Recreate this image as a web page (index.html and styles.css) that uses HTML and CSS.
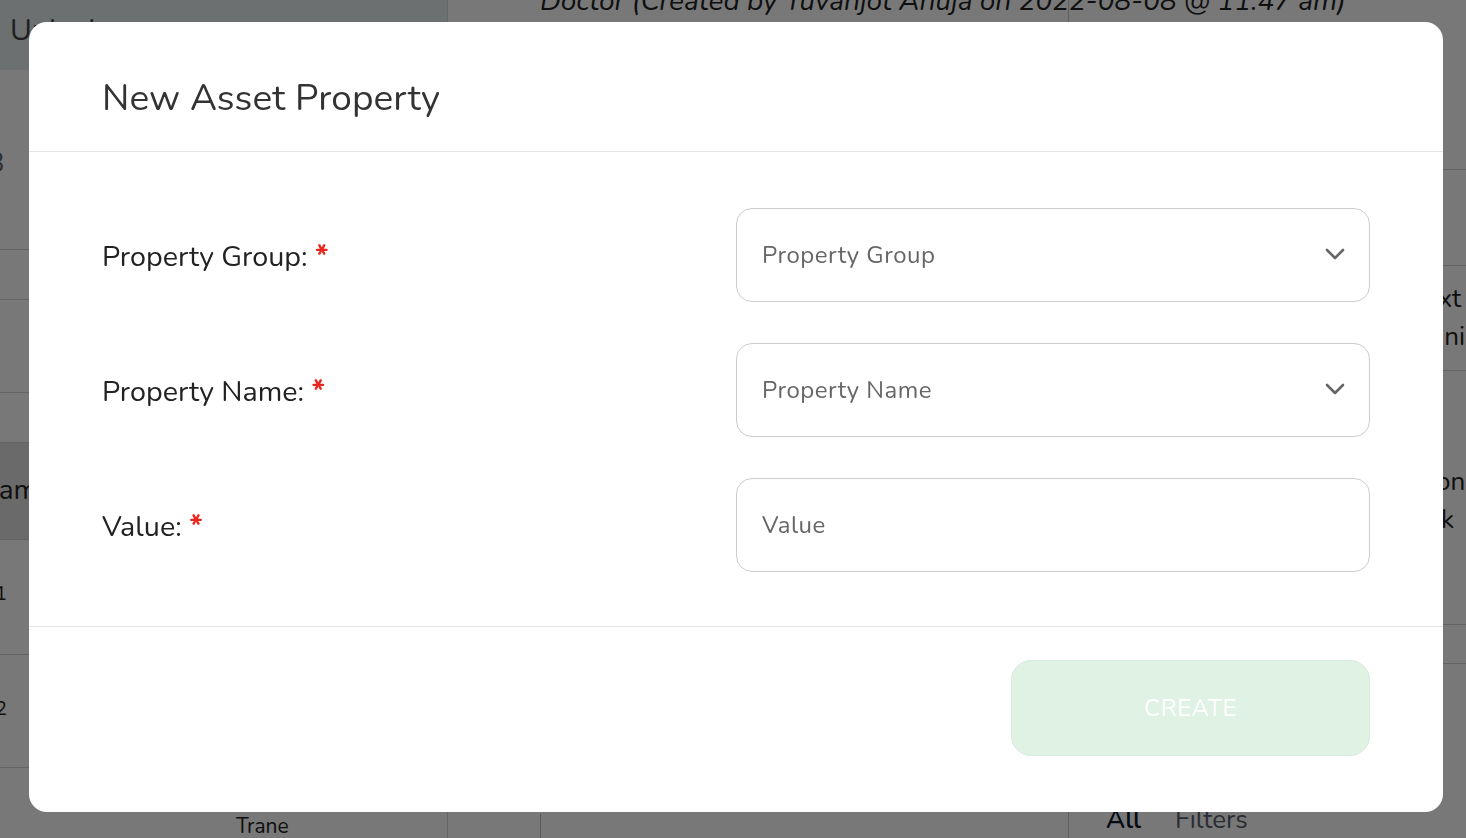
FILE: index.html
```html
<!DOCTYPE html>
<html lang="en">
<head>
<meta charset="utf-8">
<title>New Asset Property</title>
<link rel="stylesheet" href="styles.css">
</head>
<body>
<div class="page">
  <aside class="left">
    <div class="l-head">Unlock</div>
    <div class="l-row r1"><span class="clip">3</span></div>
    <div class="l-row r2"></div>
    <div class="l-row r3"></div>
    <div class="l-row r4"></div>
    <div class="l-row band"><span class="clip">Name</span></div>
    <div class="l-row r5"><span class="clip">1</span></div>
    <div class="l-row r6"><span class="clip">2</span></div>
    <div class="l-row r7"><span class="trane">Trane</span></div>
  </aside>
  <main class="mid">
    <div class="doc-title">Doctor (Created by Yuvanjot Ahuja on 2022-08-08 @ 11:47 am)</div>
    <div class="mid-fill"></div>
    <div class="mid-bottom"><div class="card-edge"></div></div>
  </main>
  <section class="right">
    <div class="r-row a"></div>
    <div class="r-row b"></div>
    <div class="r-row c"><span class="rt l1">Text</span><span class="rt l2">Administrator</span></div>
    <div class="r-row d"><span class="rt l3">Json</span><span class="rt l4">Link</span></div>
    <div class="r-row e"></div>
    <div class="r-row f"></div>
    <div class="r-tabs"><span class="tab-on">All</span><span class="tab-off">Filters</span></div>
  </section>
</div>

<div class="overlay"></div>

<div class="modal" role="dialog" aria-label="New Asset Property">
  <header class="modal-head">
    <h2 class="modal-title">New Asset Property</h2>
  </header>
  <div class="modal-body">
    <div class="form-row">
      <label class="field-label">Property Group: <span class="req">*</span></label>
      <div class="field select">
        <span class="ph">Property Group</span>
        <svg class="chev" width="20" height="12" viewBox="0 0 20 12"><path d="M2 2 L10 10 L18 2" fill="none" stroke="#666" stroke-width="2.6" stroke-linecap="round" stroke-linejoin="round"/></svg>
      </div>
    </div>
    <div class="form-row">
      <label class="field-label">Property Name: <span class="req">*</span></label>
      <div class="field select">
        <span class="ph">Property Name</span>
        <svg class="chev" width="20" height="12" viewBox="0 0 20 12"><path d="M2 2 L10 10 L18 2" fill="none" stroke="#666" stroke-width="2.6" stroke-linecap="round" stroke-linejoin="round"/></svg>
      </div>
    </div>
    <div class="form-row">
      <label class="field-label">Value: <span class="req">*</span></label>
      <div class="field">
        <span class="ph">Value</span>
      </div>
    </div>
  </div>
  <footer class="modal-foot">
    <button class="btn-create" type="button">CREATE</button>
  </footer>
</div>
</body>
</html>
```

FILE: styles.css
```css
* { box-sizing: border-box; }
html, body { margin: 0; padding: 0; }
body {
  width: 1466px;
  height: 838px;
  overflow: hidden;
  background: #fff;
  font-family: "Nunito", "Lato", "Noto Sans", sans-serif;
  color: #222;
}

/* background page */
.page {
  display: grid;
  grid-template-columns: 448px 620px 398px;
  height: 838px;
}
.left {
  border-right: 1px solid #d8d8d8;
  display: flex;
  flex-direction: column;
}
.l-head {
  height: 70px;
  background: #e6eded;
  color: #444;
  font-size: 30px;
  padding: 10px 10px 0;
}
.l-row { border-bottom: 1px solid #d4d4d4; position: relative; overflow: hidden; }
.r1 { height: 180px; }
.r2 { height: 50px; }
.r3 { height: 93px; }
.r4 { height: 50px; }
.band { height: 97px; background: #e2e2e2; }
.r5 { height: 115px; }
.r6 { height: 113px; }
.r7 { flex: 1; border-bottom: 0; }
.clip {
  display: block;
  font-size: 24px;
  color: #222;
  margin-left: -10px;
  white-space: nowrap;
}
.r1 .clip { margin-top: 74px; font-size: 28px; color: #666; margin-left: -12px; }
.band .clip { margin-top: 28px; font-size: 28px; margin-left: -22px; }
.r5 .clip, .r6 .clip { margin-top: 40px; font-size: 20px; margin-left: -5px; }
.trane { display: block; margin: 44px 0 0 236px; font-size: 21px; color: #222; }

.mid { display: flex; flex-direction: column; }
.doc-title {
  margin-top: -18px;
  padding-left: 92px;
  font-size: 28px;
  font-style: italic;
  white-space: nowrap;
  color: #222;
  height: 60px;
}
.mid-fill { flex: 1; }
.mid-bottom { height: 26px; display: flex; }
.card-edge { margin-left: 92px; flex: 1; border-left: 1px solid #bbb; }

.right { display: flex; flex-direction: column; border-left: 1px solid #ccc; }
.r-row { border-bottom: 1px solid #d0d0d0; position: relative; overflow: hidden; }
.r-row.a { height: 170px; }
.r-row.b { height: 96px; }
.r-row.c { height: 105px; }
.r-row.d { height: 254px; }
.r-row.e { height: 39px; }
.r-row.f { flex: 1; border-bottom: 0; }
.rt { display: block; font-size: 26px; line-height: 38px; color: #222; white-space: nowrap; }
.rt.l1 { margin-top: 14px; margin-left: 342px; }
.rt.l2 { margin-left: 313px; }
.rt.l3 { margin-top: 92px; margin-left: 346px; }
.rt.l4 { margin-left: 337px; }
.r-tabs { height: 26px; padding-left: 37px; font-size: 26px; line-height: 12px; white-space: nowrap; }
.tab-on { color: #0b1730; font-weight: 600; margin-right: 34px; }
.tab-off { color: #5a5f6e; }

/* overlay */
.overlay {
  position: fixed;
  inset: 0;
  background: rgba(0, 0, 0, 0.53);
}

/* modal */
.modal {
  position: fixed;
  left: 29px;
  top: 22px;
  width: 1414px;
  height: 790px;
  background: #fff;
  border-radius: 18px;
  display: flex;
  flex-direction: column;
  overflow: hidden;
}
.modal-head {
  height: 130px;
  border-bottom: 1px solid #e3e3e3;
  display: flex;
  align-items: center;
  padding: 23px 73px 0;
}
.modal-title {
  margin: 0;
  font-size: 37px;
  font-weight: 400;
  color: #333;
  letter-spacing: 0.1px;
}
.modal-body {
  padding: 56px 73px 54px;
  display: flex;
  flex-direction: column;
  gap: 41px;
  border-bottom: 1px solid #e3e3e3;
}
.form-row {
  display: grid;
  grid-template-columns: 1fr 1fr;
  align-items: center;
}
.field-label {
  font-size: 28.7px;
  color: #222;
  padding-top: 2px;
}
.req { color: #e8261d; font-weight: 700; font-size: 30px; }
.field {
  height: 94px;
  border: 1px solid #cccccc;
  border-radius: 16px;
  display: flex;
  align-items: center;
  justify-content: space-between;
  padding: 0 24px 0 25px;
}
.ph { font-size: 24px; color: #666; letter-spacing: 0.5px; }
.chev { display: block; margin-top: -2px; }
.modal-foot {
  flex: 1;
  display: flex;
  justify-content: flex-end;
  align-items: flex-start;
  padding: 33px 73px 0;
}
.btn-create {
  width: 359px;
  height: 96px;
  background: #dff2e4;
  border: 1px solid #d6ecdc;
  border-radius: 20px;
  color: #fff;
  font-family: "Nunito", "Lato", "Noto Sans", sans-serif;
  font-size: 24px;
  letter-spacing: 0.5px;
  padding: 0;
}
```
